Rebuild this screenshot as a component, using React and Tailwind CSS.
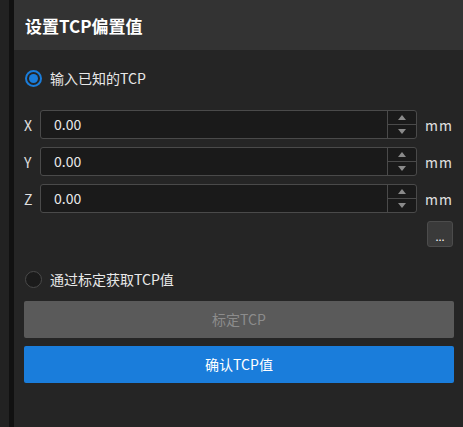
import React from "react";

const font = { fontFamily: '"Noto Sans CJK SC", "Noto Sans", sans-serif' };

function Radio({ checked, label }) {
  return (
    <div className="flex items-center h-[20px]">
      {checked ? (
        <div className="w-[17px] h-[17px] rounded-full border-[2px] border-[#1a7ddb] flex items-center justify-center ml-[1px]">
          <div className="w-[9px] h-[9px] rounded-full bg-[#1a7ddb]" />
        </div>
      ) : (
        <div className="w-[17px] h-[17px] rounded-full border-[1.5px] border-[#4a4a4a] bg-[#1b1b1b] ml-[1px]" />
      )}
      <span className="ml-[8px] text-[14px] text-[#e8e8e8] leading-none">{label}</span>
    </div>
  );
}

function NumRow({ label }) {
  return (
    <div className="flex items-center h-[29px]">
      <span className="w-[16px] text-[14px] text-[#e0e0e0] leading-none">{label}</span>
      <div className="flex h-[29px] w-[377px] border border-[#4a4a4a] rounded-[3px] bg-[#1a1a1a]">
        <div className="flex-1 flex items-center pl-[13px] text-[14px] text-[#e8e8e8]">0.00</div>
        <div className="w-[29px] border-l border-[#4a4a4a] flex flex-col">
          <div className="flex-1 flex items-center justify-center border-b border-[#4a4a4a]">
            <svg width="8" height="5" viewBox="0 0 8 5"><path d="M0 5 L4 0 L8 5 Z" fill="#8a8a8a" /></svg>
          </div>
          <div className="flex-1 flex items-center justify-center">
            <svg width="8" height="5" viewBox="0 0 8 5"><path d="M0 0 L8 0 L4 5 Z" fill="#8a8a8a" /></svg>
          </div>
        </div>
      </div>
      <span className="ml-[8px] text-[14px] tracking-[1px] text-[#e0e0e0] leading-none">mm</span>
    </div>
  );
}

export default function App() {
  return (
    <div className="flex w-[463px] h-[427px] overflow-hidden" style={font}>
      <div className="w-[9px] bg-[#222222]" />
      <div className="w-[5px] bg-[#111111]" />
      <div className="flex-1 bg-[#252525] flex flex-col">
        <div className="h-[50px] bg-[#333333] flex items-center pl-[11px]">
          <span className="text-[17px] font-bold text-white leading-none">设置TCP偏置值</span>
        </div>
        <div className="flex flex-col pl-[10px] pr-[9px]">
          <div className="mt-[18px]">
            <Radio checked label="输入已知的TCP" />
          </div>
          <div className="mt-[22px] flex flex-col gap-[8px]">
            <NumRow label="X" />
            <NumRow label="Y" />
            <NumRow label="Z" />
          </div>
          <div className="flex justify-end mt-[8px] pr-[1px]">
            <div className="w-[26px] h-[26px] rounded-[3px] bg-[#3a3a3a] border border-[#4c4c4c] flex items-end justify-center pb-[4px] text-[11px] text-white leading-none">
              ...
            </div>
          </div>
          <div className="mt-[22px]">
            <Radio label="通过标定获取TCP值" />
          </div>
          <div className="mt-[12px] h-[37px] rounded-[2px] bg-[#5a5a5a] flex items-center justify-center text-[14px] text-[#8c8c8c]">
            标定TCP
          </div>
          <div className="mt-[8px] h-[37px] rounded-[2px] bg-[#1a7ddb] flex items-center justify-center text-[14px] text-white">
            确认TCP值
          </div>
        </div>
      </div>
    </div>
  );
}
